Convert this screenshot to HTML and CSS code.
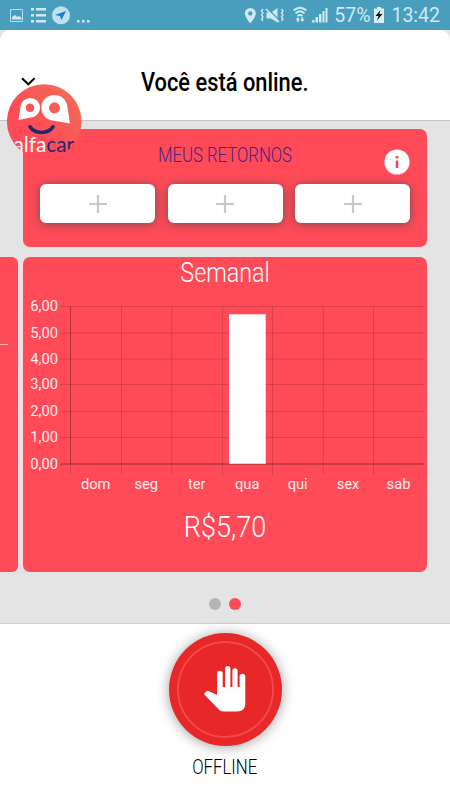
FILE: index.html
```html
<!DOCTYPE html>
<html lang="pt-BR">
<head>
  <meta charset="UTF-8">
  <title>Alfacar</title>
  <link rel="stylesheet" href="styles.css">
</head>
<body>
  <div class="statusbar">
    <svg class="status-left" width="92" height="30" viewBox="0 0 92 30" fill="#cfe9f3">
      <path d="M10.500 9.500h12v12h-12z" fill="none" stroke="#b5dcea"/>
      <path d="M12 19.500v-2.500l3-2 2 2 2-1 2.500 2v1.500z"/>
      <path d="M31 8h3v2.500h-3zM36 8h10v2.500h-10zM31 14h3v2.500h-3zM36 14h10v2.500h-10zM31 20h3v2.500h-3zM36 20h10v2.500h-10z"/>
      <circle cx="61" cy="15.300" r="9" fill="#bfe0ed"/>
      <path d="M66 11l-4.500 9-1.500-4-5-1z" fill="#1b7fc9"/>
      <path d="M77 20h2.500v2.500H77zM82 20h2.500v2.500H82zM87 20h2.500v2.500H87z"/>
    </svg>
    <div class="status-right">
      <svg width="86" height="30" viewBox="245 0 86 30" fill="#cfe9f3">
        <path fill-rule="evenodd" d="M251.300 8a5.500 5.500 0 0 0-5.500 5.500c0 3.800 5.500 9.700 5.500 9.700s5.500-5.900 5.500-9.700a5.500 5.500 0 0 0-5.500-5.500zm0 3.200a2.200 2.200 0 1 1 0 4.400 2.200 2.200 0 0 1 0-4.400z"/>
        <path d="M267.500 12.500h4.500l6.500-4.500v14.500l-6.500-4h-4.500z"/>
        <path d="M264 9l-1.500 2 1.500 2-1.500 2 1.500 2-1.500 2 1.500 2M282.500 9l1.500 2-1.500 2 1.500 2-1.500 2 1.500 2-1.500 2" fill="none" stroke="#cfe9f3" stroke-width="1.300"/>
        <path d="M268.500 8.500l13 13" fill="none" stroke="#4a9ebd" stroke-width="1.500"/>
        <path d="M267 9l13 13" fill="none" stroke="#cfe9f3" stroke-width="1.500"/>
        <path d="M294.500 10.500q6.500-5.500 13 0M296.500 13.300q4.500-4 9 0M298.500 16q2.500-2 5 0" fill="none" stroke="#cfe9f3" stroke-width="1.800"/>
        <path d="M296.500 19.800l2.300-2.500 2.200 2.500h-1.300v2.200h-1.800v-2.200zM301 19.500l2.300 2.500 2.200-2.500h-1.300v-2.200h-1.800v2.200z"/>
        <path d="M313.500 20h2v2.500h-3zM316.500 17h2.500v5.500h-2.500zM320 14h2.500v8.500H320zM323.500 11h2v11.500h-2zM326.500 8h2v14.500h-2z"/>
      </svg>
      <span class="battery-level">57%</span>
      <svg class="battery" width="10" height="16" viewBox="0 0 10 16"><path d="M3 0h4v1.500h3V16H0V1.500h3z" fill="#d8edf5"/><path d="M6.500 3L1.500 9h3L3 13.500 8.500 7H5.300z" fill="#111"/></svg>
      <span class="clock">13:42</span>
    </div>
  </div>

  <div class="screen">
    <header class="header">
      <svg class="chevron" width="15" height="9" viewBox="0 0 15 9"><path d="M1 1.300l6.300 6 6.300-6" fill="none" stroke="#000" stroke-width="2"/></svg>
      <h1 class="title">Você está online.</h1>
      <svg class="logo" width="76" height="76" viewBox="0 0 76 76">
        <defs>
          <linearGradient id="logo-bg" x1="0" y1="1" x2="1" y2="0"><stop offset=".35" stop-color="#ff4a57"/><stop offset="1" stop-color="#ee7355"/></linearGradient>
          <clipPath id="logo-clip"><circle cx="38.200" cy="38.500" r="37.300"/></clipPath>
        </defs>
        <g clip-path="url(#logo-clip)">
          <path d="M0 0h76v76H0z" fill="url(#logo-bg)"/>
          <path fill-rule="evenodd" d="M12.500 37L14.500 24A9.800 9.800 0 1 1 25 34.500zM24 20.500a4.200 4.200 0 1 0 0 8.400 4.200 4.200 0 0 0 0-8.400z" fill="#fff"/>
          <path fill-rule="evenodd" d="M64 40.500L46.500 37.500A12.800 12.800 0 0 1 48 12C55 12 60.500 16.500 61.300 23zM48.500 19.300a5.500 5.500 0 1 0 0 11 5.500 5.500 0 0 0 0-11z" fill="#fff"/>
          <path d="M24 43.800c5 7.500 18 7.500 23 0" fill="none" stroke="#1c2a70" stroke-width="3.600" stroke-linecap="round"/>
          <text x="7.500" y="69" class="logo-text" textLength="60.500" lengthAdjust="spacingAndGlyphs"><tspan fill="#fff">alfa</tspan><tspan fill="#26286e">car</tspan></text>
        </g>
      </svg>
    </header>

    <main class="content">
      <section class="card returns">
        <h2 class="returns-title">MEUS RETORNOS</h2>
        <svg class="info" width="26" height="26" viewBox="0 0 26 26"><circle cx="13" cy="13" r="12.600" fill="#fff"/><path d="M11.700 7h2.600v2.600h-2.600zM11.700 11.500h2.600v7.500h-2.600z" fill="#f04854"/></svg>
        <div class="slots">
          <button class="slot"><svg width="18" height="18" viewBox="0 0 18 18"><path d="M9 0v18M0 9h18" stroke="#c8c8c8" stroke-width="2.200"/></svg></button>
          <button class="slot"><svg width="18" height="18" viewBox="0 0 18 18"><path d="M9 0v18M0 9h18" stroke="#c8c8c8" stroke-width="2.200"/></svg></button>
          <button class="slot"><svg width="18" height="18" viewBox="0 0 18 18"><path d="M9 0v18M0 9h18" stroke="#c8c8c8" stroke-width="2.200"/></svg></button>
        </div>
      </section>

      <div class="carousel">
        <div class="card prev"><div class="prev-line"></div></div>
        <div class="gutter"></div>
        <section class="card weekly">
          <h2 class="weekly-title">Semanal</h2>
          <svg class="chart" width="404" height="210" viewBox="23 290 404 210">
            <path class="grid" d="M60 306.500h364M60 333h364M60 359h364M60 384.500h364M60 411.500h364M60 437.500h364M121.500 306v169M171.700 306v169M222.600 306v169M272.500 306v169M323.300 306v169M373.500 306v169"/>
            <path class="axis" d="M70.500 306v158"/>
            <path class="grid" d="M70.500 464v11"/>
            <path class="baseline" d="M60 464h364"/>
            <path d="M229 314.200h36.700v149.500H229z" fill="#fff"/>
            <g class="labels labels-y">
              <text x="58" y="311">6,00</text>
              <text x="58" y="337.500">5,00</text>
              <text x="58" y="363.500">4,00</text>
              <text x="58" y="389.300">3,00</text>
              <text x="58" y="416">2,00</text>
              <text x="58" y="442">1,00</text>
              <text x="58" y="468.500">0,00</text>
            </g>
            <g class="labels labels-x">
              <text x="95.700" y="489.300">dom</text>
              <text x="146.200" y="489.300">seg</text>
              <text x="196.700" y="489.300">ter</text>
              <text x="247.200" y="489.300">qua</text>
              <text x="297.700" y="489.300">qui</text>
              <text x="348" y="489.300">sex</text>
              <text x="398.500" y="489.300">sab</text>
            </g>
          </svg>
          <p class="total">R$5,70</p>
        </section>
      </div>

      <div class="dots"><span class="dot"></span><span class="dot active"></span></div>
    </main>

    <footer class="footer">
      <button class="stop">
        <span class="ring">
          <svg width="42" height="46" viewBox="0 0 42 46" fill="#fff"><path d="M13 29V7.500a2.800 2.800 0 0 1 5.700 0V21H21V2.800a2.700 2.700 0 0 1 5.400 0V21h2V4.800a2.600 2.600 0 0 1 5.200 0V21h2V10.500a2.800 2.800 0 0 1 5.700 0V37.500c0 5-3 8-8 8H19.500c-2 0-3.500-.8-4.800-2.200L.8 29c-1.300-1.500 1.400-4.400 3.700-3.900z"/></svg>
        </span>
      </button>
      <p class="state">OFFLINE</p>
    </footer>
  </div>
</body>
</html>
```
FILE: styles.css
```css
* { box-sizing: border-box; }
body { margin: 0; width: 450px; height: 800px; overflow: hidden; font-family: Roboto, sans-serif; background: #e4e4e4; color: #000; }
h1, h2, p { margin: 0; white-space: nowrap; }
svg { display: block; }
button { border: 0; padding: 0; }

.statusbar { height: 30px; display: flex; justify-content: space-between; background: #4a9ebd; color: #cfe9f3; font-size: 19.5px; line-height: 32px; }
.status-right { display: flex; padding-right: 10px; }
.battery-level { margin-left: 4px; }
.battery { margin: 7px 7px 0 4px; }

.screen { height: 770px; display: flex; flex-direction: column; }
.header { position: relative; height: 91px; background: #fff; border-radius: 10px 10px 0 0; border-bottom: 1px solid #c6c6c6; display: flex; justify-content: center; padding-top: 36px; }
.title { font-size: 26px; font-weight: 500; line-height: 32px; transform: scaleX(0.84); }
.chevron { position: absolute; left: 21px; top: 47px; }
.logo { position: absolute; left: 6px; top: 53px; z-index: 2; }
.logo-text { font: 400 21px Lato, sans-serif; }

.content { height: 502px; padding-top: 8px; }
.card { background: #ff4a57; border-radius: 7px; }
.returns { position: relative; width: 404px; height: 118px; margin-left: 23px; padding: 14px 17px 0; text-align: center; }
.returns-title { font-size: 20.5px; line-height: 24px; font-weight: 300; color: #4b2485; transform: scaleX(0.815); }
.info { position: absolute; right: 17px; top: 20px; }
.slots { display: grid; grid-template-columns: repeat(3, 1fr); gap: 12.5px; margin-top: 17px; }
.slot { height: 39px; display: flex; justify-content: center; align-items: center; background: #fff; border-radius: 6px; box-shadow: 0 1px 10px rgba(70, 80, 80, 0.75); }

.carousel { display: flex; height: 315px; margin-top: 9.5px; }
.prev { width: 18px; border-radius: 0 6px 6px 0; padding-top: 87px; }
.prev-line { width: 8px; height: 1px; background: #ffb3b8; }
.gutter { width: 5px; margin: 4px 0; background: #f5dce0; }
.weekly { width: 404px; color: #fff; text-align: center; }
.weekly-title { font-size: 27px; line-height: 33px; font-weight: 300; transform: scaleX(0.86); }
.grid, .axis, .baseline { fill: none; stroke: #000; stroke-opacity: 0.13; stroke-width: 1; }
.axis { stroke-opacity: 0.3; }
.baseline { stroke-opacity: 0.27; stroke-width: 1.5; }
.labels { font-size: 14.7px; fill: #ffecee; }
.labels-y { text-anchor: end; }
.labels-x { text-anchor: middle; }
.total { font-size: 30px; line-height: 36px; font-weight: 300; margin-top: 9px; transform: scaleX(0.9); }

.dots { display: flex; justify-content: center; gap: 8px; margin-top: 26px; }
.dot { width: 12px; height: 12px; border-radius: 50%; background: #b5b5b5; }
.dot.active { background: #ff4a57; }

.footer { flex: 1; background: #fff; border-top: 1px solid #cfcfcf; display: flex; flex-direction: column; align-items: center; padding-top: 9px; }
.stop { width: 113px; height: 113px; border-radius: 50%; background: #e72728; display: flex; justify-content: center; align-items: center; box-shadow: 0 1px 13px rgba(0, 0, 0, 0.38); }
.ring { width: 97px; height: 97px; border: 2px solid #f4474c; border-radius: 50%; display: flex; justify-content: center; align-items: center; padding-bottom: 2px; }
.state { margin-top: 8px; font-size: 21px; line-height: 26px; font-weight: 300; transform: scaleX(0.8); }
```
